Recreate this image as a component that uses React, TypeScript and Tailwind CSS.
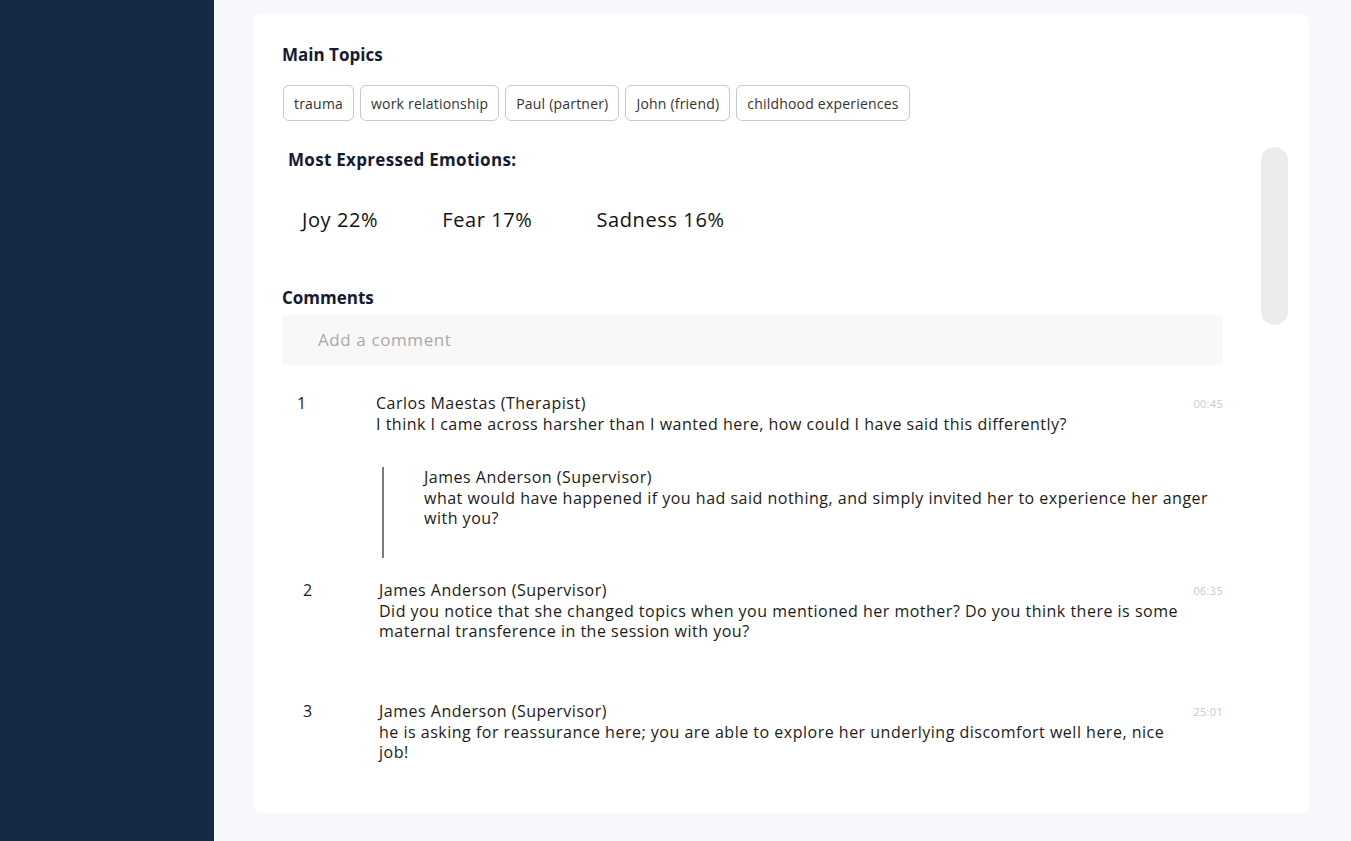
import React from "react";

const topics = ["trauma", "work relationship", "Paul (partner)", "John (friend)", "childhood experiences"];

const emotions = ["Joy 22%", "Fear 17%", "Sadness 16%"];

const SessionNotes = () => {
  return (
    <div className="flex h-screen w-full bg-[#f7f8fc] font-['Open_Sans',sans-serif] text-[#1b1b1b]">
      <aside className="w-[214px] shrink-0 bg-[#162b43]"></aside>

      <main className="flex-1 pl-[39px] pr-[42px] pt-[14px] pb-[28px]">
        <div className="h-full rounded-lg bg-white pl-[29px] pt-[29px]">
          <div className="flex">
            <div className="w-[941px]">
              <h2 className="text-[17px] leading-6 font-bold text-[#151b33]">Main Topics</h2>
              <div className="mt-[18px] flex gap-[6px] pl-px">
                {topics.map((t) => (
                  <span
                    key={t}
                    className="h-[36px] flex items-center rounded-md border border-[#c9c9c9] px-[10px] text-[14px] tracking-[0.2px] text-[#333]"
                  >
                    {t}
                  </span>
                ))}
              </div>

              <h2 className="mt-[27px] pl-[6px] text-[17px] leading-6 font-bold tracking-[0.3px] text-[#151b33]">
                Most Expressed Emotions:
              </h2>
              <div className="mt-[36px] flex gap-[64px] pl-[20px] text-[20px] leading-6 tracking-[0.6px] text-[#111]">
                {emotions.map((e) => (
                  <span key={e}>{e}</span>
                ))}
              </div>

              <h2 className="mt-[54px] text-[17px] leading-6 font-bold text-[#151b33]">Comments</h2>
              <div className="mt-[5px] h-[50px] flex items-center rounded bg-[#f8f8f8] pl-[36px] text-[17px] tracking-[0.6px] text-[#a9a9a9]">
                Add a comment
              </div>

              {/* comment 1 */}
              <div className="mt-[28px] flex text-[16px] leading-5 tracking-[0.5px]">
                <div className="w-[94px] shrink-0 pl-[15px]">1</div>
                <div className="flex-1">
                  <div className="flex">
                    <div className="flex-1">
                      <p>Carlos Maestas (Therapist)</p>
                      <p className="mt-px">
                        I think I came across harsher than I wanted here, how could I have said this differently?
                      </p>
                    </div>
                    <span className="pt-[3px] text-[11px] leading-4 tracking-[0.3px] text-[#c9c9c9]">00:45</span>
                  </div>
                  <div className="mt-[33px] ml-[6px] border-l-2 border-[#7b7b7b] pl-[40px] pb-[30px]">
                    <p>James Anderson (Supervisor)</p>
                    <p className="mt-px">
                      what would have happened if you had said nothing, and simply invited her to experience her anger
                      with you?
                    </p>
                  </div>
                </div>
              </div>

              {/* comment 2 */}
              <div className="mt-[22px] flex text-[16px] leading-5 tracking-[0.5px]">
                <div className="w-[97px] shrink-0 pl-[21px]">2</div>
                <div className="flex-1 pr-[15px]">
                  <p>James Anderson (Supervisor)</p>
                  <p className="mt-px">
                    Did you notice that she changed topics when you mentioned her mother? Do you think there is some
                    maternal transference in the session with you?
                  </p>
                </div>
                <span className="pt-[3px] text-[11px] leading-4 tracking-[0.3px] text-[#c9c9c9]">06:35</span>
              </div>

              {/* comment 3 */}
              <div className="mt-[60px] flex text-[16px] leading-5 tracking-[0.5px]">
                <div className="w-[97px] shrink-0 pl-[21px]">3</div>
                <div className="flex-1 pr-[15px]">
                  <p>James Anderson (Supervisor)</p>
                  <p className="mt-px">
                    he is asking for reassurance here; you are able to explore her underlying discomfort well here, nice
                    job!
                  </p>
                </div>
                <span className="pt-[3px] text-[11px] leading-4 tracking-[0.3px] text-[#c9c9c9]">25:01</span>
              </div>
            </div>

            <div className="ml-[38px] mt-[104px] h-[178px] w-[27px] rounded-full bg-[#ebebeb]"></div>
          </div>
        </div>
      </main>
    </div>
  );
};

export default SessionNotes;
